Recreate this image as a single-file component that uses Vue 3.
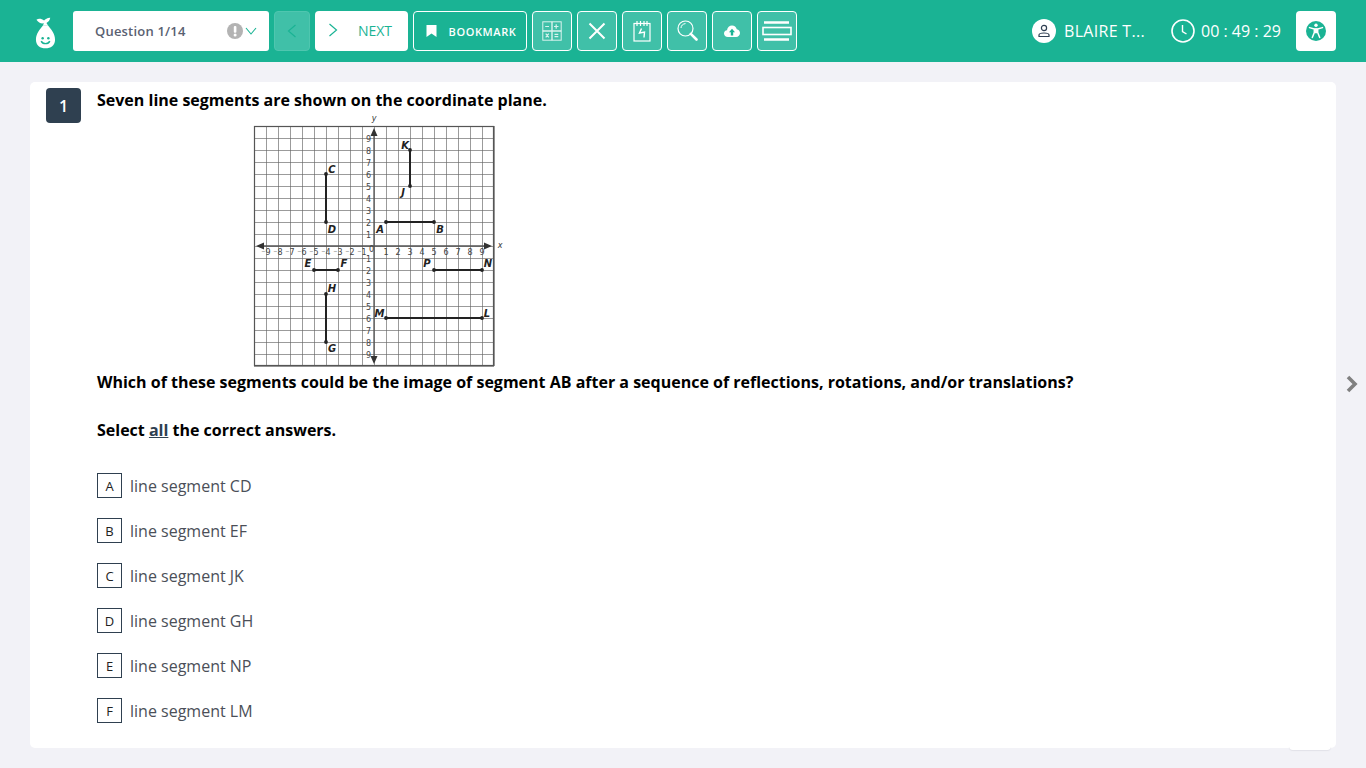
<template>
  <div class="page">
    <!-- TOP BAR -->
    <header class="topbar">
      <svg class="logo" width="22" height="34" viewBox="0 0 22 34">
        <path d="M1.5 3 C4 1.5 7 2 9.5 4 C11 2.5 13 .8 16 1 C15.5 3.5 14 5.5 12 6.5 L13.5 9 H8.5 L9.2 6.8 C6.5 7.5 3.5 6 1.5 3 Z" fill="#fff" />
        <path d="M8.5 9 H13.5 C16.5 13 21 17.5 21 24 C21 30 16.5 33 11 33 C5.5 33 1 30 1 24 C1 17.5 5.5 13 8.5 9 Z" fill="#fff" />
        <circle cx="8" cy="22.5" r="1.3" fill="#1ab394" />
        <circle cx="14" cy="22.5" r="1.3" fill="#1ab394" />
        <path d="M6.5 25.5 C8 29 14 29 15.5 25.5" fill="none" stroke="#1ab394" stroke-width="1.5" />
      </svg>

      <div class="question-select">
        <span>Question 1/14</span>
        <span class="select-icons">
          <svg width="16" height="16" viewBox="0 0 16 16">
            <circle cx="8" cy="8" r="8" fill="#b3b3b3" />
            <rect x="6.8" y="3" width="2.6" height="6.8" rx="1" fill="#fff" />
            <circle cx="8.1" cy="12" r="1.5" fill="#fff" />
          </svg>
          <svg width="12" height="8" viewBox="0 0 12 8">
            <path d="M1 1 L6 7 L11 1" fill="none" stroke="#1ab394" stroke-width="1.1" />
          </svg>
        </span>
      </div>

      <button class="btn btn-prev">
        <svg width="10" height="14" viewBox="0 0 10 14">
          <path d="M8.5 1 L1.5 7 L8.5 13" fill="none" stroke="#1ab394" stroke-width="1.2" />
        </svg>
      </button>
      <button class="btn btn-next">
        <svg width="10" height="14" viewBox="0 0 10 14">
          <path d="M1.5 1 L8.5 7 L1.5 13" fill="none" stroke="#1ab394" stroke-width="1.2" />
        </svg>
        <span>NEXT</span>
      </button>
      <button class="btn btn-bookmark">
        <svg width="11" height="12" viewBox="0 0 11 12">
          <path d="M0.5 0 H10.5 V12 L5.5 8.6 L0.5 12 Z" fill="#fff" />
        </svg>
        <span>BOOKMARK</span>
      </button>

      <button class="btn btn-tool">
        <svg width="20" height="20" viewBox="0 0 20 20" fill="none" stroke="#fff" stroke-opacity=".8">
          <rect x=".8" y=".8" width="18.4" height="18.4" />
          <path d="M10 .8 V19.2 M.8 10 H19.2" stroke-width="1.4" />
          <path d="M3.2 5.5 H7 M12 5.5 H16.5 M14.2 3.2 V7.8 M3.7 12.7 L6.8 16.3 M6.8 12.7 L3.7 16.3 M12.5 13.3 H16.3 M12.5 15.7 H16.3" stroke-width="1.2" />
        </svg>
      </button>
      <button class="btn btn-tool">
        <svg width="18" height="18" viewBox="0 0 18 18" fill="none" stroke="#fff" stroke-width="2">
          <path d="M1.5 1.5 L16.5 16.5 M16.5 1.5 L1.5 16.5" />
        </svg>
      </button>
      <button class="btn btn-tool">
        <svg width="18" height="22" viewBox="0 0 18 22" fill="none" stroke="#fff" stroke-width="1.2">
          <rect x="1" y="3.5" width="16" height="17.5" />
          <path d="M4 1 V6 M7.5 1 V6 M11 1 V6 M14 1 V6" />
          <path d="M8.5 8.5 L6.5 13 L11.5 12 L11 17.5" stroke-width="1.4" />
        </svg>
      </button>
      <button class="btn btn-tool">
        <svg width="21" height="22" viewBox="0 0 21 22" fill="none" stroke="#fff">
          <circle cx="8.5" cy="8.5" r="7.5" stroke-width="1.2" />
          <path d="M4 8 C4 5.5 6 3.8 8.5 3.6" stroke-width="1" />
          <path d="M13.8 13.8 L19.5 19.5" stroke-width="2.6" stroke-linecap="round" />
        </svg>
      </button>
      <button class="btn btn-tool">
        <svg width="16" height="12" viewBox="0 0 16 12">
          <path d="M4 12 C1.5 12 0 10.4 0 8.5 C0 6.7 1.2 5.4 3 5.2 C3.4 2.5 5.5 .5 8 .5 C10.4 .5 12.2 2 12.8 4.2 C14.7 4.4 16 6 16 8 C16 10.3 14.4 12 12 12 Z" fill="#fff" />
          <path d="M8 3.8 L11 7.2 H9.2 V10.5 H6.8 V7.2 H5 Z" fill="#1ab394" />
        </svg>
      </button>
      <button class="btn btn-tool">
        <svg width="30" height="20" viewBox="0 0 30 20" fill="none" stroke="#fff">
          <path d="M2 1.5 H27 M2 18.5 H27" stroke-width="2.4" />
          <rect x="1" y="6.5" width="28" height="7" stroke-width="1.6" />
        </svg>
      </button>

      <div class="topbar-right">
        <span class="user-circle">
          <svg width="14" height="14" viewBox="0 0 14 14" fill="none" stroke="#2f3f52" stroke-width="1.2">
            <circle cx="7" cy="4" r="2.6" />
            <path d="M2 12.5 V11 C2 9.6 3.5 9 7 9 C10.5 9 12 9.6 12 11 V12.5 Z" />
          </svg>
        </span>
        <span class="user-name">BLAIRE T...</span>
        <svg class="clock" width="24" height="24" viewBox="0 0 24 24" fill="none" stroke="#fff">
          <circle cx="12" cy="12" r="11" stroke-width="1.6" />
          <path d="M11.5 6 V12.5 L15.5 15" stroke-width="1.4" />
        </svg>
        <span class="timer">00 : 49 : 29</span>
        <button class="btn btn-access">
          <svg width="20" height="20" viewBox="0 0 20 20">
            <circle cx="10" cy="10" r="10" fill="#1ab394" />
            <circle cx="10" cy="4.3" r="1.7" fill="#fff" />
            <path d="M3.5 6.6 L8.3 8 V11.5 L6.3 16.5 M16.5 6.6 L11.7 8 V11.5 L13.7 16.5 M8.3 8 H11.7 M8.3 11.5 H11.7" fill="none" stroke="#fff" stroke-width="1.5" stroke-linejoin="round" stroke-linecap="round" />
            <rect x="8.3" y="7.6" width="3.4" height="4" fill="#fff" />
          </svg>
        </button>
      </div>
    </header>

    <!-- QUESTION -->
    <main class="content">
      <section class="card">
        <div class="number">1</div>
        <div class="question">
          <p class="prompt">Seven line segments are shown on the coordinate plane.</p>

          <svg class="graph" width="240" height="241" viewBox="0 0 240 241">
            <g stroke="#666" stroke-width="1">
              <line v-for="n in 21" :key="'v' + n" :x1="(n - 1) * 12 + .5" y1="0" :x2="(n - 1) * 12 + .5" y2="240" stroke-opacity=".65" />
              <line v-for="n in 21" :key="'h' + n" x1="0" :y1="(n - 1) * 12 + .5" x2="240" :y2="(n - 1) * 12 + .5" stroke-opacity=".65" />
            </g>
            <rect x=".5" y=".5" width="239" height="239" fill="none" stroke="#555" stroke-width="1.2" />
            <g stroke="#555" stroke-width="1.3">
              <line x1="120" y1="4" x2="120" y2="236" />
              <line x1="4" y1="120" x2="236" y2="120" />
            </g>
            <g fill="#333">
              <path d="M120 2 L116.5 10 H123.5 Z" />
              <path d="M120 238 L116.5 230 H123.5 Z" />
              <path d="M2 120 L10 116.5 V123.5 Z" />
              <path d="M238 120 L230 116.5 V123.5 Z" />
            </g>
            <g class="ticks">
              <text v-for="n in 9" :key="'px' + n" :x="120 + n * 12" y="129" text-anchor="middle">{{ n }}</text>
              <text v-for="n in 9" :key="'nx' + n" :x="120 - n * 12" y="129" text-anchor="middle">&#8315;{{ n }}</text>
              <text v-for="n in 9" :key="'py' + n" x="117" :y="123.5 - n * 12" text-anchor="end">{{ n }}</text>
              <text v-for="n in 9" :key="'ny' + n" x="117" :y="123.5 + n * 12" text-anchor="end">&#8315;{{ n }}</text>
              <text x="120" y="126" text-anchor="end">0</text>
            </g>
            <g v-for="s in segments" :key="s.id" stroke="#222" fill="#222">
              <line :x1="px(s.a[0])" :y1="py(s.a[1])" :x2="px(s.b[0])" :y2="py(s.b[1])" stroke-width="2" />
              <circle :cx="px(s.a[0])" :cy="py(s.a[1])" r="1.9" stroke="none" />
              <circle :cx="px(s.b[0])" :cy="py(s.b[1])" r="1.9" stroke="none" />
            </g>
            <text v-for="l in letters" :key="l.t" class="point-label" :x="l.x" :y="l.y" text-anchor="middle">{{ l.t }}</text>
            <text class="axis-label" x="120" y="-5" text-anchor="middle">y</text>
            <text class="axis-label" x="246" y="122" text-anchor="middle">x</text>
          </svg>

          <p class="prompt prompt-second">Which of these segments could be the image of segment AB after a sequence of reflections, rotations, and/or translations?</p>
          <p class="prompt prompt-third">Select <u class="all-word">all</u> the correct answers.</p>

          <ul class="options">
            <li v-for="o in options" :key="o.key" class="option">
              <span class="option-key">{{ o.key }}</span>
              <span>{{ o.text }}</span>
            </li>
          </ul>
        </div>
        <div class="card-tab"></div>
      </section>
    </main>

    <svg class="next-arrow" width="12" height="18" viewBox="0 0 12 18">
      <path d="M2 2 L9 9 L2 16" fill="none" stroke="#808080" stroke-width="3.6" />
    </svg>
  </div>
</template>

<script setup>
const px = (v) => 120 + v * 12
const py = (v) => 120 - v * 12

const segments = [
  { id: 'AB', a: [1, 2], b: [5, 2] },
  { id: 'CD', a: [-4, 6], b: [-4, 2] },
  { id: 'JK', a: [3, 8], b: [3, 5] },
  { id: 'EF', a: [-5, -2], b: [-3, -2] },
  { id: 'GH', a: [-4, -4], b: [-4, -8] },
  { id: 'NP', a: [5, -2], b: [9, -2] },
  { id: 'LM', a: [1, -6], b: [9, -6] }
]

const letters = [
  { t: 'C', x: 78, y: 47 },
  { t: 'K', x: 151, y: 23 },
  { t: 'J', x: 149, y: 70 },
  { t: 'D', x: 78, y: 107 },
  { t: 'A', x: 126, y: 107 },
  { t: 'B', x: 186, y: 107 },
  { t: 'E', x: 54, y: 141 },
  { t: 'F', x: 90, y: 141 },
  { t: 'P', x: 173, y: 141 },
  { t: 'N', x: 234, y: 141 },
  { t: 'H', x: 78, y: 166 },
  { t: 'M', x: 125.5, y: 191 },
  { t: 'L', x: 233, y: 191 },
  { t: 'G', x: 78, y: 226 }
]

const options = [
  { key: 'A', text: 'line segment CD' },
  { key: 'B', text: 'line segment EF' },
  { key: 'C', text: 'line segment JK' },
  { key: 'D', text: 'line segment GH' },
  { key: 'E', text: 'line segment NP' },
  { key: 'F', text: 'line segment LM' }
]
</script>

<style>
html,
body {
  margin: 0;
  background: #f2f2f7;
}
</style>

<style scoped>
.page {
  position: relative;
  height: 768px;
  overflow: hidden;
  background: #f2f2f7;
  font-family: 'Open Sans', sans-serif;
}

.topbar {
  display: flex;
  align-items: center;
  gap: 5px;
  height: 62px;
  padding: 0 30px 0 35px;
  box-sizing: border-box;
  background: #1ab394;
}

.logo {
  flex: none;
  width: 21px;
  margin: 4px 12px 0 0;
}

.question-select {
  display: flex;
  align-items: center;
  justify-content: space-between;
  width: 196px;
  height: 40px;
  padding: 0 12px 0 22px;
  box-sizing: border-box;
  background: #fff;
  border-radius: 3px;
  font-size: 13px;
  font-weight: 600;
  letter-spacing: .2px;
  color: #5a6172;
}

.select-icons {
  display: flex;
  align-items: center;
  gap: 2px;
}

.btn {
  display: flex;
  align-items: center;
  justify-content: center;
  height: 40px;
  padding: 0;
  box-sizing: border-box;
  border-radius: 4px;
  border: none;
  font-family: inherit;
}

.btn-prev {
  width: 36px;
  background: #40c0a8;
  border: 1px solid #4fc6af;
}

.btn-next {
  width: 93px;
  gap: 20px;
  padding: 0 3px 2px 0;
  background: #fff;
  font-size: 14px;
  color: #1ab394;
}

.btn-bookmark {
  width: 114px;
  gap: 12px;
  padding-left: 2px;
  background: #1ab394;
  border: 1px solid #fff;
  font-size: 11px;
  font-weight: 600;
  letter-spacing: .6px;
  color: #fff;
}

.btn-tool {
  width: 40px;
  background: #40c0a8;
  border: 1px solid #fff;
}

.topbar-right {
  display: flex;
  align-items: center;
  margin-left: auto;
}

.user-circle {
  display: flex;
  align-items: center;
  justify-content: center;
  width: 24px;
  height: 24px;
  border-radius: 50%;
  background: #fff;
}

.user-name {
  width: 107px;
  margin-left: 8px;
  font-size: 16px;
  font-weight: 500;
  letter-spacing: .3px;
  color: #fff;
}

.timer {
  width: 95px;
  margin-left: 6px;
  font-size: 16px;
  font-weight: 500;
  color: #fff;
}

.btn-access {
  width: 40px;
  background: #fff;
}

.content {
  padding: 20px 30px 0;
}

.card {
  position: relative;
  display: flex;
  height: 666px;
  box-sizing: border-box;
  padding: 6px 16px;
  background: #fff;
  border-radius: 5px;
}

.number {
  display: flex;
  align-items: center;
  justify-content: center;
  flex: none;
  width: 35px;
  height: 35px;
  border-radius: 4px;
  background: #2f4050;
  font-size: 16px;
  font-weight: 600;
  color: #fff;
}

.question {
  margin-left: 16px;
  color: #000;
}

.prompt {
  margin: 0;
  font-size: 16px;
  line-height: 24px;
  font-weight: 700;
}

.all-word {
  color: #2f4050;
}

.graph {
  display: block;
  margin: 14px 0 3px 157px;
  overflow: visible;
}

.prompt-third {
  margin-top: 24px;
}

.ticks text {
  font-family: 'DejaVu Sans', sans-serif;
  font-size: 8px;
  fill: #444;
}

.point-label {
  font-family: 'DejaVu Sans', sans-serif;
  font-size: 10px;
  font-weight: 700;
  font-style: italic;
  fill: #222;
}

.axis-label {
  font-family: 'DejaVu Sans', sans-serif;
  font-size: 8px;
  font-style: italic;
  fill: #333;
}

.options {
  margin: 31px 0 0;
  padding: 0;
  list-style: none;
}

.option {
  display: flex;
  align-items: center;
  gap: 8px;
  height: 25px;
  margin-bottom: 20px;
  font-size: 16px;
  color: #4b4f58;
}

.option-key {
  display: flex;
  align-items: center;
  justify-content: center;
  width: 25px;
  height: 25px;
  box-sizing: border-box;
  border: 1px solid #2f4050;
  font-size: 13px;
  font-weight: 500;
  color: #222;
}

.card-tab {
  position: absolute;
  right: 5px;
  bottom: -2px;
  width: 42px;
  height: 4px;
  border-radius: 0 0 4px 4px;
  background: #fff;
  box-shadow: 0 1px 1px #e2e2e8;
}

.next-arrow {
  position: absolute;
  top: 375px;
  right: 8px;
}
</style>
